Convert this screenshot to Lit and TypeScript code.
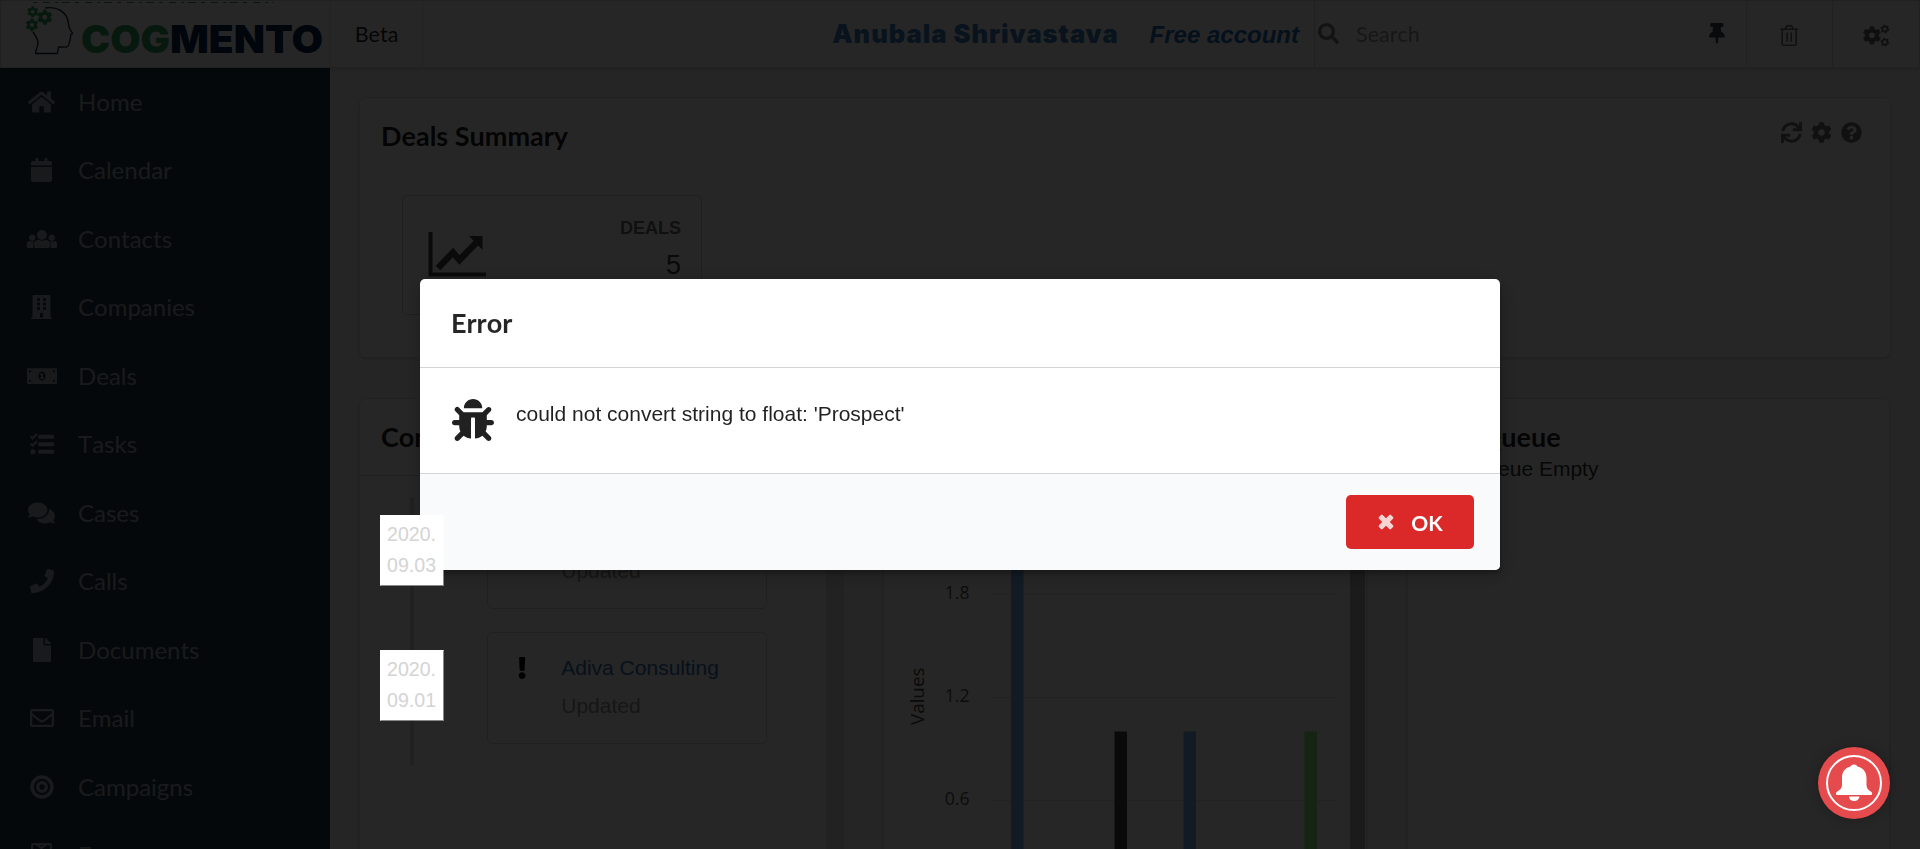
import { LitElement, html, css, svg } from "lit";
import { customElement, property } from "lit/decorators.js";

const COG =
  "M444.788 291.1l42.616 24.599c4.867 2.809 7.126 8.618 5.459 13.985-11.07 35.642-29.97 67.842-54.689 94.586a12.016 12.016 0 0 1-14.832 2.254l-42.584-24.595a191.577 191.577 0 0 1-60.759 35.13v49.182a12.01 12.01 0 0 1-9.377 11.718c-34.956 7.85-72.499 8.256-109.219.007-5.49-1.233-9.403-6.096-9.403-11.723v-49.184a191.555 191.555 0 0 1-60.759-35.13l-42.584 24.595a12.016 12.016 0 0 1-14.832-2.254c-24.718-26.744-43.619-58.944-54.689-94.586-1.667-5.366.592-11.175 5.459-13.985L67.212 291.1a193.48 193.48 0 0 1 0-70.199l-42.616-24.599c-4.867-2.809-7.126-8.618-5.459-13.985 11.07-35.642 29.97-67.842 54.689-94.586a12.016 12.016 0 0 1 14.832-2.254l42.584 24.595a191.577 191.577 0 0 1 60.759-35.13V25.759a12.01 12.01 0 0 1 9.377-11.718c34.956-7.85 72.499-8.256 109.219-.007 5.49 1.233 9.403 6.096 9.403 11.723v49.184a191.555 191.555 0 0 1 60.759 35.13l42.584-24.595a12.016 12.016 0 0 1 14.832 2.254c24.718 26.744 43.619 58.944 54.689 94.586 1.667 5.366-.592 11.175-5.459 13.985L444.788 220.9a193.485 193.485 0 0 1 0 70.2zM336 256c0-44.112-35.888-80-80-80s-80 35.888-80 80 35.888 80 80 80 80-35.888 80-80z";

const p = (d: string) => svg`<path fill-rule="evenodd" d=${d}></path>`;

const ICONS: Record<string, { w: number; body: unknown }> = {
  home: {
    w: 576,
    body: p("M488 312.7V456c0 13.3-10.7 24-24 24H348c-6.6 0-12-5.4-12-12V356c0-6.6-5.4-12-12-12h-72c-6.6 0-12 5.4-12 12v112c0 6.6-5.4 12-12 12H112c-13.3 0-24-10.7-24-24V312.7c0-3.6 1.6-7 4.4-9.3l188-154.8c4.4-3.6 10.8-3.6 15.3 0l188 154.8c2.7 2.3 4.3 5.7 4.3 9.3zm83.6-60.9L488 182.9V44.4c0-6.6-5.4-12-12-12h-56c-6.6 0-12 5.4-12 12V117l-89.5-73.7c-17.7-14.6-43.3-14.6-61 0L4.4 251.8c-5.1 4.2-5.8 11.8-1.6 16.9l25.5 31c4.2 5.1 11.8 5.8 16.9 1.6l235.2-193.7c4.4-3.6 10.8-3.6 15.3 0l235.2 193.7c5.1 4.2 12.7 3.5 16.9-1.6l25.5-31c4.2-5.2 3.4-12.7-1.7-16.9z"),
  },
  calendar: {
    w: 448,
    body: p("M12 192h424c6.6 0 12 5.4 12 12v260c0 26.5-21.5 48-48 48H48c-26.5 0-48-21.5-48-48V204c0-6.6 5.4-12 12-12zm436-44v-36c0-26.5-21.5-48-48-48h-48V12c0-6.6-5.4-12-12-12h-40c-6.6 0-12 5.4-12 12v52H160V12c0-6.6-5.4-12-12-12h-40c-6.6 0-12 5.4-12 12v52H48C21.5 64 0 85.5 0 112v36c0 6.6 5.4 12 12 12h424c6.6 0 12-5.4 12-12z"),
  },
  users: {
    w: 640,
    body: p("M320 64c57.99 0 105 47.01 105 105s-47.01 105-105 105-105-47.01-105-105S262.01 64 320 64zm113.463 217.366l-39.982-9.996c-49.168 35.365-108.766 27.473-146.961 0l-39.982 9.996C174.485 289.379 152 318.177 152 351.216V412c0 19.882 16.118 36 36 36h264c19.882 0 36-16.118 36-36v-60.784c0-33.039-22.485-61.837-54.537-69.85zM528 300c38.66 0 70-31.34 70-70s-31.34-70-70-70-70 31.34-70 70 31.34 70 70 70zm-416 0c38.66 0 70-31.34 70-70s-31.34-70-70-70-70 31.34-70 70 31.34 70 70 70zm24 148v-96.784c0-16.551 4.593-32.204 12.703-45.599-29.988 14.72-63.336 8.708-85.69-7.37l-26.655 6.664C14.99 310.252 0 329.452 0 351.477V424c0 13.255 10.745 24 24 24zm467.642-143.09l-26.655-6.664c-27.925 20.086-60.89 19.233-85.786 7.218C499.369 318.893 504 334.601 504 351.216V448H616c13.255 0 24-10.745 24-24v-72.523c0-22.025-14.99-41.225-36.358-46.567z"),
  },
  building: {
    w: 448,
    body: p("M436 480h-20V24c0-13.255-10.745-24-24-24H56C42.745 0 32 10.745 32 24v456H12c-6.627 0-12 5.373-12 12v20h448v-20c0-6.627-5.373-12-12-12zM128 76c0-6.627 5.373-12 12-12h40c6.627 0 12 5.373 12 12v40c0 6.627-5.373 12-12 12h-40c-6.627 0-12-5.373-12-12V76zm0 96c0-6.627 5.373-12 12-12h40c6.627 0 12 5.373 12 12v40c0 6.627-5.373 12-12 12h-40c-6.627 0-12-5.373-12-12v-40zm52 148h-40c-6.627 0-12-5.373-12-12v-40c0-6.627 5.373-12 12-12h40c6.627 0 12 5.373 12 12v40c0 6.627-5.373 12-12 12zm76 160h-64v-84c0-6.627 5.373-12 12-12h40c6.627 0 12 5.373 12 12v84zm64-172c0 6.627-5.373 12-12 12h-40c-6.627 0-12-5.373-12-12v-40c0-6.627 5.373-12 12-12h40c6.627 0 12 5.373 12 12v40zm0-96c0 6.627-5.373 12-12 12h-40c-6.627 0-12-5.373-12-12v-40c0-6.627 5.373-12 12-12h40c6.627 0 12 5.373 12 12v40zm0-96c0 6.627-5.373 12-12 12h-40c-6.627 0-12-5.373-12-12V76c0-6.627 5.373-12 12-12h40c6.627 0 12 5.373 12 12v40z"),
  },
  money: {
    w: 640,
    body: svg`
      <path fill-rule="evenodd" d="M24 88h592a24 24 0 0 1 24 24v288a24 24 0 0 1-24 24H24a24 24 0 0 1-24-24V112A24 24 0 0 1 24 88zM44 132v52a52 52 0 0 0 52-52zM596 132h-52a52 52 0 0 0 52 52zM44 380h52a52 52 0 0 0-52-52zM596 380v-52a52 52 0 0 0-52 52zM320 160c-44 0-76 42-76 96s32 96 76 96 76-42 76-96-32-96-76-96z"></path>
      <path d="M296 200h44v86h22v32h-84v-32h22v-48h-22v-28z"></path>`,
  },
  tasks: {
    w: 512,
    body: svg`
      <rect x="176" y="60" width="336" height="84" rx="22"></rect>
      <rect x="176" y="218" width="336" height="84" rx="22"></rect>
      <rect x="176" y="378" width="336" height="84" rx="22"></rect>
      <circle cx="62" cy="420" r="54"></circle>
      <path fill="none" stroke="currentColor" stroke-width="42" d="M12 92l44 42 92-94M12 250l44 42 92-94"></path>`,
  },
  comments: {
    w: 576,
    body: p("M416 192c0-88.4-93.1-160-208-160S0 103.6 0 192c0 34.3 14.1 65.9 38 92-13.4 30.2-35.5 54.2-35.8 54.5-2.2 2.3-2.8 5.7-1.5 8.7S4.8 352 8 352c36.6 0 66.9-12.3 88.7-25 32.2 15.7 70.3 25 111.3 25 114.9 0 208-71.6 208-160zm122 220c23.9-26 38-57.7 38-92 0-66.9-53.5-124.2-129.3-148.1.9 6.6 1.3 13.3 1.3 20.1 0 105.9-107.7 192-240 192-10.8 0-21.3-.8-31.7-1.9C207.8 439.6 281.8 480 368 480c41 0 79.1-9.2 111.3-25 21.8 12.7 52.1 25 88.7 25 3.2 0 6.1-1.9 7.3-4.8 1.3-2.9.7-6.3-1.5-8.7-.3-.3-22.4-24.2-35.8-54.5z"),
  },
  phone: {
    w: 512,
    body: p("M493.4 24.6l-104-24c-11.3-2.6-22.9 3.3-27.5 13.9l-48 112c-4.2 9.8-1.4 21.3 6.9 28l60.6 49.6c-36 76.7-98.9 140.5-177.2 177.2l-49.6-60.6c-6.8-8.3-18.2-11.1-28-6.9l-112 48C3.9 366.5-2 378.1.6 389.4l24 104C27.1 504.2 36.7 512 48 512c256.1 0 464-207.5 464-464 0-11.2-7.7-20.9-18.6-23.4z"),
  },
  file: {
    w: 384,
    body: p("M224 136V0H24C10.7 0 0 10.7 0 24v464c0 13.3 10.7 24 24 24h336c13.3 0 24-10.7 24-24V160H248c-13.2 0-24-10.8-24-24zm160-14.1v6.1H256V0h6.1c6.4 0 12.5 2.5 17 7l97.9 98c4.5 4.5 7 10.6 7 16.9z"),
  },
  envelope: {
    w: 512,
    body: p("M464 64H48C21.49 64 0 85.49 0 112v288c0 26.51 21.49 48 48 48h416c26.51 0 48-21.49 48-48V112c0-26.51-21.49-48-48-48zm0 48v40.805c-22.422 18.259-58.168 46.651-134.587 106.49-16.841 13.247-50.201 45.072-73.413 44.701-23.208.375-56.579-31.459-73.413-44.701C106.18 199.465 70.425 171.067 48 152.805V112h416zM48 400V214.398c22.914 18.251 55.409 43.862 104.938 82.646 21.857 17.205 60.134 55.186 103.062 54.955 42.717.231 80.509-37.199 103.053-54.947 49.528-38.783 82.032-64.401 104.947-82.653V400H48z"),
  },
  bullseye: {
    w: 512,
    body: svg`
      <circle cx="256" cy="256" r="212" fill="none" stroke="currentColor" stroke-width="74"></circle>
      <circle cx="256" cy="256" r="92" fill="none" stroke="currentColor" stroke-width="70"></circle>`,
  },
  form: {
    w: 448,
    body: svg`<path fill="none" stroke="currentColor" stroke-width="46" d="M24 40q0-16 16-16h368q16 0 16 16v432q0 16-16 16H40q-16 0-16-16zM110 24l114 84L338 24M110 190h228M110 290h228"></path>`,
  },
  search: {
    w: 512,
    body: p("M505 442.7L405.3 343c-4.5-4.5-10.6-7-17-7H372c27.6-35.3 44-79.7 44-128C416 93.1 322.9 0 208 0S0 93.1 0 208s93.1 208 208 208c48.3 0 92.7-16.4 128-44v16.3c0 6.4 2.5 12.5 7 17l99.7 99.7c9.4 9.4 24.6 9.4 33.9 0l28.3-28.3c9.4-9.4 9.4-24.6.1-34zM208 336c-70.7 0-128-57.2-128-128 0-70.7 57.2-128 128-128 70.7 0 128 57.2 128 128 0 70.7-57.2 128-128 128z"),
  },
  pin: {
    w: 384,
    body: p("M298.028 214.267L285.793 96H328c13.255 0 24-10.745 24-24V24c0-13.255-10.745-24-24-24H56C42.745 0 32 10.745 32 24v48c0 13.255 10.745 24 24 24h42.207L85.972 214.267C37.465 236.82 0 277.261 0 328c0 13.255 10.745 24 24 24h136v104.007c0 1.242.289 2.467.845 3.578l24 48c2.941 5.882 11.364 5.893 14.311 0l24-48a8.008 8.008 0 0 0 .845-3.578V352h136c13.255 0 24-10.745 24-24-.001-51.183-37.983-91.42-85.973-113.733z"),
  },
  trash: {
    w: 448,
    body: svg`<path fill="none" stroke="currentColor" stroke-width="40" d="M10 104h428M54 104v366q0 24 24 24h292q24 0 24-24V104M126 100l30-64q8-16 24-16h88q16 0 24 16l30 64M174 184v226M274 184v226"></path>`,
  },
  cog: { w: 512, body: p(COG) },
  cogs: {
    w: 640,
    body: svg`
      <path transform="translate(-12 22) scale(.9)" fill-rule="evenodd" d=${COG}></path>
      <g fill="none" stroke="currentColor" stroke-width="40">
        <circle cx="534" cy="98" r="64"></circle><circle cx="534" cy="418" r="64"></circle>
      </g>
      <g fill="none" stroke="currentColor" stroke-width="40" stroke-dasharray="40 52.1">
        <circle cx="534" cy="98" r="88"></circle><circle cx="534" cy="418" r="88"></circle>
      </g>`,
  },
  refresh: {
    w: 512,
    body: p("M440.935 12.574l3.966 82.766C399.416 41.904 331.674 8 256 8 134.813 8 33.933 94.924 12.296 209.824 10.908 217.193 16.604 224 24.103 224h49.084c5.57 0 10.377-3.842 11.676-9.259C103.407 137.408 172.931 80 256 80c60.893 0 114.512 30.856 146.104 77.801l-101.53-4.865c-6.845-.327-12.574 5.133-12.574 11.986v47.411c0 6.627 5.373 12 12 12h200.333c6.627 0 12-5.373 12-12V12c0-6.627-5.373-12-12-12h-47.411c-6.853 0-12.315 5.729-11.987 12.574zM256 432c-60.895 0-114.517-30.858-146.109-77.805l101.868 4.871c6.845.327 12.573-5.134 12.573-11.986v-47.412c0-6.627-5.373-12-12-12H12c-6.627 0-12 5.373-12 12V500c0 6.627 5.373 12 12 12h47.385c6.863 0 12.328-5.745 11.985-12.599l-4.129-82.575C112.725 470.166 180.405 504 256 504c121.187 0 222.067-86.924 243.704-201.824 1.388-7.369-4.308-14.176-11.807-14.176h-49.084c-5.57 0-10.377 3.842-11.676 9.259C408.593 374.592 339.069 432 256 432z"),
  },
  help: {
    w: 512,
    body: p("M504 256c0 136.997-111.043 248-248 248S8 392.997 8 256C8 119.083 119.043 8 256 8s248 111.083 248 248zM262.655 90c-54.497 0-89.255 22.957-116.549 63.758-3.536 5.286-2.353 12.415 2.715 16.258l34.699 26.31c5.205 3.947 12.621 3.008 16.665-2.122 17.864-22.658 30.113-35.797 57.303-35.797 20.429 0 45.698 13.148 45.698 32.958 0 14.976-12.363 22.667-32.534 33.976C247.128 238.528 216 254.941 216 296v4c0 6.627 5.373 12 12 12h56c6.627 0 12-5.373 12-12v-1.333c0-28.462 83.186-29.647 83.186-106.667 0-58.002-60.165-102-116.531-102zM256 338c-25.365 0-46 20.635-46 46 0 25.364 20.635 46 46 46s46-20.636 46-46c0-25.365-20.635-46-46-46z"),
  },
  alert: {
    w: 192,
    body: p("M176 432c0 44.112-35.888 80-80 80s-80-35.888-80-80 35.888-80 80-80 80 35.888 80 80zM25.26 25.199l13.6 272C39.499 309.972 50.041 320 62.83 320h66.34c12.789 0 23.331-10.028 23.97-22.801l13.6-272C167.425 11.49 156.496 0 142.77 0H49.23C35.504 0 24.575 11.49 25.26 25.199z"),
  },
  bug: {
    w: 512,
    body: p("M511.988 288.9c-.478 17.43-15.217 31.1-32.653 31.1H424v16c0 21.864-4.882 42.584-13.6 61.145l60.228 60.228c12.496 12.497 12.496 32.758 0 45.255-12.498 12.497-32.759 12.496-45.256 0l-54.736-54.736C345.886 467.965 314.351 480 280 480V236c0-6.627-5.373-12-12-12h-24c-6.627 0-12 5.373-12 12v244c-34.351 0-65.886-12.035-90.636-32.108l-54.736 54.736c-12.498 12.497-32.759 12.496-45.256 0-12.496-12.497-12.496-32.758 0-45.255l60.228-60.228C92.882 378.584 88 357.864 88 336v-16H32.666C15.23 320 .491 306.33.013 288.9-.484 270.816 14.028 256 32 256h56v-58.745l-46.628-46.628c-12.496-12.497-12.496-32.758 0-45.255 12.498-12.497 32.758-12.497 45.256 0L141.255 160h229.489l54.627-54.627c12.498-12.497 32.758-12.497 45.256 0 12.496 12.497 12.496 32.758 0 45.255L424 197.255V256h56c17.972 0 32.484 14.816 31.988 32.9zM257 0c-61.856 0-112 50.144-112 112h224C369 50.144 318.856 0 257 0z"),
  },
  close: {
    w: 512,
    body: svg`<g transform="rotate(45 256 256)"><rect x="-16" y="172" width="544" height="168" rx="38"></rect><rect x="172" y="-16" width="168" height="544" rx="38"></rect></g>`,
  },
};

@customElement("fa-icon")
class FaIcon extends LitElement {
  @property() name = "home";
  @property({ type: Number }) size = 24;

  static styles = css`
    :host {
      display: inline-flex;
      flex: none;
    }
    svg {
      display: block;
      fill: currentColor;
      overflow: visible;
    }
  `;

  render() {
    const icon = ICONS[this.name];
    return html`<svg
      width=${(icon.w / 512) * this.size}
      height=${this.size}
      viewBox="0 0 ${icon.w} 512"
    >
      ${icon.body}
    </svg>`;
  }
}

const NAV: [string, string][] = [
  ["home", "Home"],
  ["calendar", "Calendar"],
  ["users", "Contacts"],
  ["building", "Companies"],
  ["money", "Deals"],
  ["tasks", "Tasks"],
  ["comments", "Cases"],
  ["phone", "Calls"],
  ["file", "Documents"],
  ["envelope", "Email"],
  ["bullseye", "Campaigns"],
  ["form", "Forms"],
];

const EVENTS = [
  { day: ["2020.", "09.03"], company: "Adiva Consulting" },
  { day: ["2020.", "09.01"], company: "Adiva Consulting" },
];

const BARS = [
  { x: 1011, value: 2, color: "#7cb5ec" },
  { x: 1114.5, value: 1, color: "#434348" },
  { x: 1183.5, value: 1, color: "#7cb5ec" },
  { x: 1304.5, value: 1, color: "#90ed7d" },
];

@customElement("app-root")
class AppRoot extends LitElement {
  static styles = css`
    :host {
      display: block;
      height: 849px;
      overflow: hidden;
      background: #f7f7f7;
      color: rgba(0, 0, 0, 0.87);
      font: 21px/1.4285 "Liberation Sans", Arial, sans-serif;
      font-kerning: none;
    }
    * {
      box-sizing: border-box;
    }
    .topbar {
      display: flex;
      height: 68px;
      background: #fff;
      border: 1px solid #d8d9d9;
      box-shadow: 0 1px 3px rgba(34, 36, 38, 0.18);
      font: 21.5px/1 Lato, sans-serif;
      font-kerning: none;
    }
    .logo {
      width: 330px;
      border-right: 1px solid #e6e6e6;
    }
    .logo svg {
      display: block;
      overflow: visible;
    }
    .logo-word {
      font: 900 38px Inter, sans-serif;
    }
    .beta {
      display: flex;
      align-items: center;
      justify-content: center;
      width: 92px;
      padding-top: 1px;
      border-right: 1px solid #e2e2e2;
    }
    .account {
      display: flex;
      flex: 1;
      align-items: center;
      justify-content: flex-end;
      gap: 31px;
      padding-right: 15px;
      border-right: 1px solid #d8d8d8;
      white-space: nowrap;
    }
    .user {
      color: #4183c4;
      font: 900 25.6px/1 Inter, sans-serif;
      letter-spacing: 0.95px;
    }
    .plan {
      padding-top: 1px;
      color: #1e70bf;
      font: italic 700 24px/1 "Liberation Sans", Arial, sans-serif;
    }
    .search {
      display: flex;
      align-items: center;
      width: 432px;
      padding: 0 21px 2px 3px;
      border-right: 1px solid #dcdcdc;
      color: #808080;
    }
    .search-text {
      flex: 1;
      padding: 4px 0 0 17px;
      color: #9a9a9a;
    }
    .search .pin {
      color: #3a4450;
    }
    .tool {
      display: flex;
      align-items: center;
      justify-content: center;
      width: 86px;
      padding-top: 3px;
      border-right: 1px solid #dcdcdc;
      color: #747474;
    }
    .tool.last {
      border-right: 0;
      color: #666;
    }
    .body {
      display: flex;
      height: 781px;
    }
    .sidebar {
      flex: none;
      width: 330px;
      overflow: hidden;
      background: #1f3a4d;
    }
    .nav {
      display: flex;
      align-items: center;
      height: 68.5px;
      padding: 0 0 1px 27px;
      color: #a6adb2;
      font: 24px/1 Lato, sans-serif;
      font-kerning: none;
    }
    .nav-icon {
      display: flex;
      justify-content: center;
      width: 29px;
      margin-right: 22px;
    }
    .content {
      flex: 1;
      min-width: 0;
      padding: 29px 29px 0;
    }
    .segment {
      background: #fff;
      border: 1px solid #dededf;
      border-radius: 7px;
      box-shadow: 0 1px 3px rgba(34, 36, 38, 0.15);
    }
    .title {
      font: 700 27px/1 Lato, sans-serif;
      font-kerning: none;
      color: rgba(0, 0, 0, 0.9);
    }
    .summary {
      height: 261px;
      padding: 23px 28px 0 21px;
    }
    .summary-head {
      display: flex;
      justify-content: space-between;
      height: 30px;
    }
    .summary .title {
      padding-top: 1px;
    }
    .actions {
      display: flex;
      gap: 9px;
      color: #707070;
      padding-top: 1px;
    }
    .stat {
      display: flex;
      justify-content: space-between;
      width: 300px;
      height: 120px;
      margin: 44px 0 0 21px;
      padding: 21px 20px 0 25px;
      border: 1px solid #cfcfcf;
      border-radius: 5px;
    }
    .stat svg {
      display: block;
      margin-top: 15px;
    }
    .stat-text {
      text-align: right;
    }
    .stat-label {
      color: #6e6e6e;
      font: 700 18px/22px "Liberation Sans", Arial, sans-serif;
    }
    .stat-value {
      padding-top: 8px;
      color: #3c3c3c;
      font: 27px/36px "Liberation Sans", Arial, sans-serif;
    }
    .columns {
      display: grid;
      grid-template-columns: 484px 484px 483px;
      gap: 40px;
      margin-top: 40px;
    }
    .column {
      height: 500px;
      overflow: hidden;
    }
    .column-head {
      height: 77px;
      padding: 24px 21px 0;
      border-bottom: 1px solid #d4d4d5;
    }
    .scroll {
      display: flex;
      justify-content: space-between;
      height: 423px;
    }
    .track {
      width: 16px;
      background: #e4e4e4;
    }
    .track.thumb {
      width: 15px;
      margin-right: 1px;
      background: #b4b4b4;
    }
    .timeline {
      position: relative;
      width: 407px;
      padding: 21px 0 0 20px;
    }
    .rail {
      position: absolute;
      left: 50px;
      top: 21px;
      width: 4px;
      height: 268px;
      background: #dcdddd;
    }
    .event {
      display: flex;
      justify-content: space-between;
      align-items: flex-start;
      height: 135px;
    }
    .day {
      position: relative;
      z-index: 20;
      width: 64px;
      height: 71px;
      margin-top: 18px;
      padding: 3px 0 0 6px;
      border: 1px solid rgba(255, 255, 255, 0.45);
      border-left-color: #fff;
      border-top-color: #fff;
      background: #fff;
      background-clip: padding-box;
      color: #d4d4d4;
      font: 19.6px/31px "Liberation Sans", Arial, sans-serif;
    }
    .event-card {
      display: flex;
      width: 280px;
      height: 112px;
      padding: 24px 0 0 30px;
      border: 1px solid #d6d6d6;
      border-radius: 5px;
      color: #000;
    }
    .event-text {
      padding: 0 0 0 35px;
      line-height: 38px;
      margin-top: -8px;
      white-space: nowrap;
    }
    .company {
      color: #2f72b3;
    }
    .state {
      color: #949494;
    }
    .chart svg {
      display: block;
    }
    .axis {
      font: 17.6px "Open Sans", "Noto Sans", sans-serif;
      fill: #555;
    }
    .axis-title {
      font: 18.8px "Open Sans", "Noto Sans", sans-serif;
      fill: #444;
    }
    .queue {
      padding: 24px 0 0 20px;
    }
    .queue-note {
      padding-top: 4px;
      color: #333;
    }
    .dimmer {
      position: fixed;
      inset: 0;
      z-index: 10;
      display: flex;
      align-items: center;
      justify-content: center;
      background: rgba(0, 0, 0, 0.85);
    }
    .modal {
      width: 1080px;
      height: 291px;
      overflow: hidden;
      border-radius: 5px;
      background: #fff;
      box-shadow: 1px 4px 4px rgba(0, 0, 0, 0.2), 1px 4px 20px 3px rgba(0, 0, 0, 0.2);
    }
    .modal-head {
      height: 89px;
      padding: 30px 31px 0;
      border-bottom: 1px solid #d4d4d5;
      color: rgba(0, 0, 0, 0.85);
      font: 700 27px/1 Lato, sans-serif;
      font-kerning: none;
    }
    .modal-body {
      display: flex;
      gap: 22px;
      height: 105px;
      padding: 31px 32px 0;
      color: rgba(0, 0, 0, 0.87);
    }
    .message {
      line-height: 29px;
    }
    .modal-foot {
      display: flex;
      justify-content: flex-end;
      height: 97px;
      padding: 21px 26px 0;
      border-top: 1px solid #d4d4d5;
      background: #f9fafb;
    }
    .ok {
      display: flex;
      align-items: center;
      justify-content: center;
      gap: 17px;
      width: 128px;
      height: 54px;
      padding: 0 0 0 1px;
      border: 0;
      border-radius: 5px;
      background: #db2828;
      color: #fff;
      font: 700 21px/1 Lato, sans-serif;
    }
    .ok fa-icon {
      opacity: 0.8;
    }
    .bell {
      position: fixed;
      right: 30px;
      bottom: 30px;
      z-index: 30;
      display: flex;
      width: 72px;
      height: 72px;
      border-radius: 50%;
      background: #e54b4d;
      box-shadow: 0 0 12px rgba(0, 0, 0, 0.25);
    }
  `;

  private logo() {
    const gear = (x: number, y: number, s: number) =>
      svg`<path fill="#2f9e62" fill-rule="evenodd" transform="translate(${x} ${y}) scale(${s / 512})" d=${COG}></path>`;
    return html`<svg width="328" height="66" viewBox="1 1 328 66">
      <path
        stroke="#3a9c78"
        stroke-width="1"
        stroke-dasharray="4 6 7 5 3 4 8 5"
        d="M33 2.5H273"
      ></path>
      ${gear(27, 6, 11.5)} ${gear(37, 9.5, 15.5)} ${gear(25.5, 18.5, 13)}
      <path
        fill="none"
        stroke="#10304e"
        stroke-width="1.4"
        stroke-linejoin="round"
        d="M45 8C58 6 68 13 68.500 24C68.500 28 69.500 29 72.500 33C72.500 34.500 70 34 70.500 36C71.500 38 70 38 70 40C70 42 69 42 69 44C68.500 48 65 47 58.500 47L57.500 53.500H35.500L36.500 49C39 42 39 41 33 32"
      ></path>
      <text class="logo-word" x="81" y="53" fill="#2fa468" textLength="89" lengthAdjust="spacingAndGlyphs">COG</text>
      <text class="logo-word" x="170" y="53" fill="#04284e" textLength="153" lengthAdjust="spacingAndGlyphs">MENTO</text>
    </svg>`;
  }

  private chart() {
    const y = (v: number) => 902 - v * 171.5;
    return html`<svg width="466" height="423" viewBox="884 475 466 423">
      ${[0.6, 1.2, 1.8].map(
        (v) => svg`
          <path stroke="#e0e0e0" stroke-width="1" d="M992 ${Math.round(y(v)) + 0.5}H1336"></path>
          <text class="axis" text-anchor="end" x="969.500" y=${y(v) + 4.5}>${v}</text>`
      )}
      <text class="axis-title" transform="translate(924 724) rotate(-90)">Values</text>
      ${BARS.map(
        (b) => svg`<rect x=${b.x} y=${y(b.value)} width="12.500" height=${b.value * 171.5} fill=${b.color}></rect>`
      )}
    </svg>`;
  }

  render() {
    return html`
      <header class="topbar">
        <div class="logo">${this.logo()}</div>
        <div class="beta">Beta</div>
        <div class="account">
          <span class="user">Anubala Shrivastava</span>
          <span class="plan">Free account</span>
        </div>
        <div class="search">
          <fa-icon name="search" size="21"></fa-icon>
          <span class="search-text">Search</span>
          <fa-icon class="pin" name="pin" size="21"></fa-icon>
        </div>
        <div class="tool"><fa-icon name="trash" size="21"></fa-icon></div>
        <div class="tool last"><fa-icon name="cogs" size="21"></fa-icon></div>
      </header>
      <div class="body">
        <nav class="sidebar">
          ${NAV.map(
            ([icon, label]) => html`<div class="nav">
              <span class="nav-icon"><fa-icon name=${icon} size="24"></fa-icon></span>
              <span>${label}</span>
            </div>`
          )}
        </nav>
        <main class="content">
          <section class="segment summary">
            <div class="summary-head">
              <div class="title">Deals Summary</div>
              <div class="actions">
                <fa-icon name="refresh" size="21"></fa-icon>
                <fa-icon name="cog" size="21"></fa-icon>
                <fa-icon name="help" size="21"></fa-icon>
              </div>
            </div>
            <div class="stat">
              <svg width="58" height="48" viewBox="0 0 58 48">
                <path fill="none" stroke="#484848" stroke-width="4" d="M2.500 0V42.500H58"></path>
                <path fill="none" stroke="#484848" stroke-width="6.500" d="M10 36L25 20.500L31.500 28L48 11"></path>
                <path fill="#484848" d="M41 4H54.500V18Z"></path>
              </svg>
              <div class="stat-text">
                <div class="stat-label">DEALS</div>
                <div class="stat-value">5</div>
              </div>
            </div>
          </section>
          <div class="columns">
            <section class="segment column">
              <div class="column-head title">Contacts</div>
              <div class="scroll">
                <div class="timeline">
                  <div class="rail"></div>
                  ${EVENTS.map(
                    (e) => html`<div class="event">
                      <div class="day">${e.day[0]}<br />${e.day[1]}</div>
                      <div class="event-card">
                        <fa-icon name="alert" size="22"></fa-icon>
                        <div class="event-text">
                          <div class="company">${e.company}</div>
                          <div class="state">Updated</div>
                        </div>
                      </div>
                    </div>`
                  )}
                </div>
                <div class="track"></div>
              </div>
            </section>
            <section class="segment column">
              <div class="column-head title">Deals</div>
              <div class="scroll chart">
                ${this.chart()}
                <div class="track thumb"></div>
              </div>
            </section>
            <section class="segment column queue">
              <div class="title">Call Queue</div>
              <div class="queue-note">Call Queue Empty</div>
            </section>
          </div>
        </main>
      </div>
      <div class="dimmer">
        <div class="modal" role="dialog">
          <div class="modal-head">Error</div>
          <div class="modal-body">
            <fa-icon name="bug" size="42"></fa-icon>
            <div class="message">could not convert string to float: 'Prospect'</div>
          </div>
          <div class="modal-foot">
            <button class="ok"><fa-icon name="close" size="16"></fa-icon>OK</button>
          </div>
        </div>
      </div>
      <div class="bell">
        <svg width="72" height="72" viewBox="0 0 72 72">
          <circle cx="36" cy="36" r="27" fill="none" stroke="#fff" stroke-width="2"></circle>
          <path
            fill="#fff"
            d="M36 17.500C38 17.500 39 18.500 39.500 19.500C46 21 48.500 26 48.500 31V38C48.500 41 50 43 53.500 45Q55 47.500 53 48H19Q17 47.500 18.500 45C22 43 24 41 24 38V31C24 26 26 21 32.500 19.500C33 18.500 34 17.500 36 17.500ZM31 49.500H41.500C41 52.500 39 54 36 54S31.500 52.500 31 49.500Z"
          ></path>
        </svg>
      </div>
    `;
  }
}
